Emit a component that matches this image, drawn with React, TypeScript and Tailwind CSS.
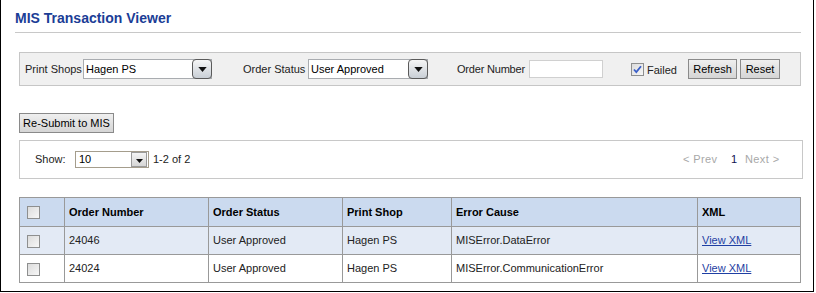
import React from "react";

type row = {
  id: number;
  order: string;
  status: string;
  shop: string;
  cause: string;
};

const rows: row[] = [
  { id: 1, order: "24046", status: "User Approved", shop: "Hagen PS", cause: "MISError.DataError" },
  { id: 2, order: "24024", status: "User Approved", shop: "Hagen PS", cause: "MISError.CommunicationError" },
];

const Check = ({ checked }: { checked?: boolean }) => (
  <span className="relative inline-block w-[13px] h-[13px] border border-[#8e8f8f] bg-gradient-to-br from-[#dcdcdc] to-[#f7f7f7] align-middle">
    {checked && (
      <svg viewBox="0 0 11 11" className="absolute left-0 top-0 w-[11px] h-[11px]">
        <path d="M2 5.5 L4.3 8 L9 2.2" fill="none" stroke="#3a5fc8" strokeWidth="1.8" />
      </svg>
    )}
  </span>
);

const DropButton = () => (
  <span className="flex items-center justify-center w-[20px] h-[20px] -mr-px rounded-[4px] border border-[#5a5a5a] bg-gradient-to-b from-[#f6f6f6] to-[#c9cfd6] shrink-0">
    <svg viewBox="0 0 10 6" className="w-[9px] h-[5px]">
      <path d="M0 0 H10 L5 6 Z" fill="#111" />
    </svg>
  </span>
);

const Select = ({ value, width }: { value: string; width: string }) => (
  <div className={`flex items-center h-[20px] border border-[#a9acb0] bg-white ${width}`}>
    <span className="flex-1 pl-[2px] text-black">{value}</span>
    <DropButton />
  </div>
);

const Button = ({ label, width }: { label: string; width: string }) => (
  <button className={`h-[20px] ${width} border border-[#8a8a8a] bg-gradient-to-b from-[#efefef] to-[#d5d5d5] text-black text-[11px] leading-none`}>
    {label}
  </button>
);

const App = () => {
  return (
    <div className="w-[814px] h-[292px] border-x border-b border-black bg-white text-[11px] text-[#222] font-['Liberation_Sans',Arial,sans-serif]">
      <div className="ml-[14px] mr-[12px] h-[33px] pt-[10px] border-b border-[#c8c8c8]">
        <h1 className="text-[14px] leading-[17px] font-bold text-[#1b3d96]">MIS Transaction Viewer</h1>
      </div>

      {/* filters */}
      <div className="ml-[18px] mt-[19px] w-[782px] h-[34px] flex items-center pl-[5px] bg-[#f0f0f0] border border-[#c6c6c6]">
        <span className="w-[58px]">Print Shops</span>
        <Select value="Hagen PS" width="w-[129px]" />
        <span className="ml-[31px] w-[65px]">Order Status</span>
        <Select value="User Approved" width="w-[120px]" />
        <span className="ml-[29px] w-[72px] tracking-[-0.2px]">Order Number</span>
        <input className="w-[74px] h-[18px] border border-[#d0d0d0] bg-white outline-none" />
        <span className="ml-[28px] flex items-center">
          <Check checked />
        </span>
        <span className="ml-[3px] w-[41px] pt-[3px]">Failed</span>
        <Button label="Refresh" width="w-[49px]" />
        <span className="ml-[3px]">
          <Button label="Reset" width="w-[40px]" />
        </span>
      </div>

      <div className="ml-[18px] mt-[27px]">
        <Button label="Re-Submit to MIS" width="w-[95px]" />
      </div>

      {/* paging */}
      <div className="ml-[18px] mt-[7px] w-[784px] h-[39px] flex items-center justify-between pl-[15px] pr-[19px] border border-[#c8c8c8]">
        <div className="flex items-center">
          <span className="w-[40px]">Show:</span>
          <div className="flex items-center w-[74px] h-[17px] border border-[#a59d8c] bg-white">
            <span className="flex-1 pl-[3px] text-black">10</span>
            <span className="flex items-center justify-center w-[16px] h-[15px] mr-px border border-[#9a9a9a] bg-gradient-to-b from-[#f4f4f4] to-[#d6d6d6]">
              <svg viewBox="0 0 7 4" className="w-[7px] h-[4px] mt-[3px]">
                <path d="M0 0 H7 L3.5 4 Z" fill="#111" />
              </svg>
            </span>
          </div>
          <span className="ml-[4px]">1-2 of 2</span>
        </div>
        <div className="flex items-center text-[#a8a8a8] tracking-[0.4px]">
          <span className="w-[48px]">&lt; Prev</span>
          <span className="w-[14px] text-[#101050]">1</span>
          <span className="w-[38px]">Next &gt;</span>
        </div>
      </div>

      {/* table */}
      <table className="ml-[18px] mt-[18px] w-[782px] table-fixed border-collapse">
        <colgroup>
          <col className="w-[45px]" />
          <col className="w-[144px]" />
          <col className="w-[134px]" />
          <col className="w-[109px]" />
          <col className="w-[246px]" />
          <col />
        </colgroup>
        <thead>
          <tr className="h-[29px] bg-[#cbdaef]">
            <th className="border border-[#999] pl-[7px] text-left">
              <Check />
            </th>
            <th className="border border-[#999] pl-[4px] text-left font-bold text-black">Order Number</th>
            <th className="border border-[#999] pl-[4px] text-left font-bold text-black">Order Status</th>
            <th className="border border-[#999] pl-[4px] text-left font-bold text-black">Print Shop</th>
            <th className="border border-[#999] pl-[4px] text-left font-bold text-black">Error Cause</th>
            <th className="border border-[#999] pl-[4px] text-left font-bold text-black">XML</th>
          </tr>
        </thead>
        <tbody>
          {rows.map((r, i) => (
            <tr key={r.id + "row"} className={`h-[28px] ${i === 0 ? "bg-[#e3eaf5]" : "bg-white"}`}>
              <td className="border border-[#999] pl-[7px]">
                <Check />
              </td>
              <td className="border border-[#999] pl-[4px]">{r.order}</td>
              <td className="border border-[#999] pl-[4px]">{r.status}</td>
              <td className="border border-[#999] pl-[4px]">{r.shop}</td>
              <td className="border border-[#999] pl-[4px]">{r.cause}</td>
              <td className="border border-[#999] pl-[4px]">
                <a href="#" className="text-[#1f3fa3] underline">
                  View XML
                </a>
              </td>
            </tr>
          ))}
        </tbody>
      </table>
    </div>
  );
};

export default App;
